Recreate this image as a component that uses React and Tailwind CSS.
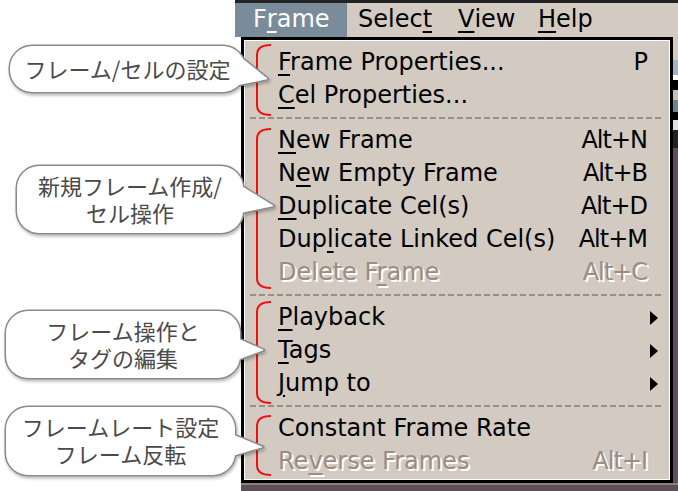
import React from "react";

const groups = [
  [
    { t: "Frame Properties...", u: 0, k: "P" },
    { t: "Cel Properties...", u: 0 },
  ],
  [
    { t: "New Frame", u: 0, k: "Alt+N" },
    { t: "New Empty Frame", u: 1, k: "Alt+B" },
    { t: "Duplicate Cel(s)", u: 0, k: "Alt+D" },
    { t: "Duplicate Linked Cel(s)", u: 3, k: "Alt+M" },
    { t: "Delete Frame", u: 8, k: "Alt+C", off: true },
  ],
  [
    { t: "Playback", u: 0, sub: true },
    { t: "Tags", u: 0, sub: true },
    { t: "Jump to", u: 0, sub: true },
  ],
  [
    { t: "Constant Frame Rate", u: -1 },
    { t: "Reverse Frames", u: 2, k: "Alt+I", off: true },
  ],
];

function Label({ t, u }) {
  if (u < 0) return t;
  return (
    <>
      {t.slice(0, u)}
      <span className="underline decoration-2 underline-offset-4">{t[u]}</span>
      {t.slice(u + 1)}
    </>
  );
}

function Arrow() {
  return (
    <svg width="8" height="14" viewBox="0 0 8 14" className="-mr-[11px] mt-[2px]">
      <polygon points="0,0 8,7 0,14" fill="#000" />
    </svg>
  );
}

function Row({ item }) {
  return (
    <div
      className={`flex h-[33px] items-center pl-[33px] pr-[22px] leading-none ${
        item.off ? "text-[#9b8d82] [text-shadow:2px_2px_0_#fff]" : "text-black"
      }`}
    >
      <span className="flex-1 whitespace-pre">
        <Label t={item.t} u={item.u} />
      </span>
      {item.k && <span className="tracking-[-1px]">{item.k}</span>}
      {item.sub && <Arrow />}
    </div>
  );
}

function Separator() {
  return (
    <div className="h-[12px] pl-[5px] pr-[7px] pt-[6px]">
      <div className="h-[2px] bg-[image:repeating-linear-gradient(90deg,#9d8e83_0_6px,transparent_6px_9px)]" />
    </div>
  );
}

function MenuBar() {
  return (
    <div className="flex h-[34px] bg-[#d3cbc1] leading-none">
      <div className="flex w-[112px] items-center bg-[#7a8b99] pb-[3px] pl-[18px] text-white">
        <Label t="Frame" u={1} />
      </div>
      <div className="flex w-[100px] items-center pb-[3px] pl-[11px]">
        <Label t="Select" u={5} />
      </div>
      <div className="flex w-[80px] items-center pb-[3px] pl-[11px]">
        <Label t="View" u={0} />
      </div>
      <div className="flex items-center pb-[3px] pl-[11px]">
        <Label t="Help" u={0} />
      </div>
    </div>
  );
}

function Bracket({ y0, y1, yt }) {
  const x = 257;
  return (
    <path
      d={`M271 ${y0} Q${x} ${y0} ${x} ${y0 + 10} L${x} ${yt - 4} Q${x} ${yt} 253 ${yt} Q${x} ${yt} ${x} ${yt + 4} L${x} ${y1 - 10} Q${x} ${y1} 271 ${y1}`}
      fill="none"
      stroke="#f01010"
      strokeWidth="2"
    />
  );
}

const bubbles = [
  { x: 10, y: 46, w: 235, h: 46, tail: "232,50 268,79 234,86" },
  { x: 17, y: 166, w: 226, h: 67, tail: "232,180 274,206 236,214" },
  { x: 6, y: 311, w: 234, h: 67, tail: "228,334 264,350 232,362" },
  { x: 6, y: 407, w: 229, h: 68, tail: "222,430 263,447 226,458" },
];

function Annotations() {
  return (
    <svg className="pointer-events-none absolute inset-0" width="678" height="491">
      <defs>
        <filter id="sh" x="-10%" y="-20%" width="120%" height="150%">
          <feDropShadow dx="1" dy="2" stdDeviation="1.5" floodColor="#000" floodOpacity="0.28" />
        </filter>
      </defs>
      <Bracket y0={45} y1={115} yt={80} />
      <Bracket y0={129} y1={288} yt={209} />
      <Bracket y0={302} y1={403} yt={350} />
      <Bracket y0={416} y1={475} yt={446} />
      {bubbles.map((b, i) => (
        <g key={i}>
          <g filter="url(#sh)" fill="#8a8a8a" stroke="#8a8a8a" strokeWidth="3" strokeLinejoin="round">
            <rect x={b.x} y={b.y} width={b.w} height={b.h} rx="22" />
            <polygon points={b.tail} />
          </g>
          <rect x={b.x} y={b.y} width={b.w} height={b.h} rx="22" fill="#fff" />
          <polygon points={b.tail} fill="#fff" />
        </g>
      ))}
    </svg>
  );
}

const notes = [
  { c: "left-[10px] top-[46px] w-[235px] h-[46px]", text: "フレーム/セルの設定" },
  { c: "left-[17px] top-[166px] w-[226px] h-[67px]", text: "新規フレーム作成/\nセル操作" },
  { c: "left-[6px] top-[311px] w-[234px] h-[67px]", text: "フレーム操作と\nタグの編集" },
  { c: "left-[6px] top-[407px] w-[229px] h-[68px]", text: "フレームレート設定\nフレーム反転" },
];

export default function App() {
  return (
    <div className="relative flex h-[491px] w-[678px] overflow-hidden bg-white font-['DejaVu_Sans',sans-serif] text-[24px]">
      <div className="w-[235px] shrink-0" />
      <div className="flex w-[443px] shrink-0 flex-col">
        <div className="h-[3px] bg-[#222]" />
        <MenuBar />
        <div className="flex h-[446px]">
          <div className="w-[6px] shrink-0 bg-white" />
          <div className="w-[432px] shrink-0 border-[3px] border-black">
            <div className="h-full border border-white bg-[#d3cbc1] pb-[2px] pt-[4px]">
              {groups.map((g, gi) => (
                <div key={gi}>
                  {gi > 0 && <Separator />}
                  {g.map((it) => (
                    <Row key={it.t} item={it} />
                  ))}
                </div>
              ))}
            </div>
          </div>
          <div className="flex w-[5px] shrink-0 flex-col">
            <div className="h-[23px] bg-[#d3cbc1]" />
            <div className="h-[15px] bg-[#9fb4c2]" />
            <div className="h-[5px] bg-white" />
            <div className="h-[10px] bg-black" />
            <div className="h-[10px] bg-[#c0c0c0]" />
            <div className="h-[12px] bg-[#6f8290]" />
            <div className="h-[8px] bg-black" />
            <div className="h-[10px] bg-[#e0e0e0]" />
            <div className="h-[18px] bg-[#222]" />
            <div className="flex-1 bg-[#5d4e5c]" />
          </div>
        </div>
        <div className="flex flex-1">
          <div className="w-[6px] shrink-0 bg-white" />
          <div className="flex-1 border-t-2 border-[#8f8076] bg-[#5d4e5c]" />
        </div>
      </div>
      <Annotations />
      {notes.map((n, i) => (
        <div
          key={i}
          className={`absolute ${n.c} flex items-center justify-center pb-[2px] text-center font-['Noto_Sans_CJK_JP',sans-serif] text-[22px] leading-[27px] whitespace-pre-line text-[#4a4a4a]`}
        >
          {n.text}
        </div>
      ))}
    </div>
  );
}
